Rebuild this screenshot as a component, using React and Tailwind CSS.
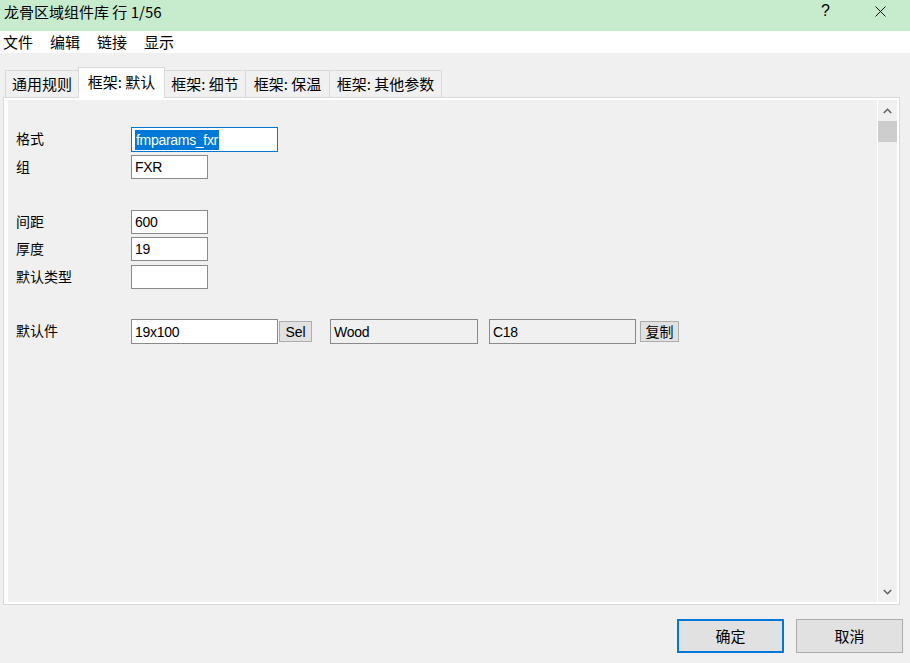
const cjk = "font-['Noto_Sans_CJK_SC',sans-serif]";
const latin = "font-['Liberation_Sans',Arial,sans-serif]";

function Field({ w, value, readOnly, focused }) {
  return (
    <div
      className={
        "h-full flex items-center px-[3px] border text-[14px] tracking-[-0.3px] leading-none text-black " +
        latin +
        " " +
        w +
        (focused ? " border-[#0078d7] bg-white" : " border-[#8a8a8a]") +
        (readOnly ? " bg-[#f0f0f0]" : focused ? "" : " bg-white")
      }
    >
      {focused ? (
        <span className="bg-[#0078d7] text-white px-[1px] py-[3px]">{value}</span>
      ) : (
        value
      )}
    </div>
  );
}

function SmallButton({ children, w, font }) {
  return (
    <div
      className={
        "h-[21px] flex items-center justify-center bg-[#e1e1e1] border border-[#adadad] leading-none text-black " +
        w +
        " " +
        font
      }
    >
      {children}
    </div>
  );
}

function Row({ label, mt, h, children }) {
  return (
    <div className={"flex items-center " + mt + " " + h}>
      <div className={"w-[123px] pl-[8px] pb-[3px] text-[14px] leading-none text-black " + cjk}>{label}</div>
      <div className="flex items-center h-full">{children}</div>
    </div>
  );
}

const tabs = [
  { label: "通用规则", w: "w-[74px]" },
  { label: "框架: 默认", w: "w-[87px]", active: true },
  { label: "框架: 细节", w: "w-[81px]" },
  { label: "框架: 保温", w: "w-[84px]" },
  { label: "框架: 其他参数", w: "w-[112px]" },
];

export default function App() {
  return (
    <div className={"w-[910px] h-[663px] bg-[#f0f0f0] flex flex-col overflow-hidden " + cjk}>
      {/* title bar */}
      <div className="h-[31px] bg-[#c6ebcd] flex items-center pl-[4px] pr-[24px] pb-[9px] shrink-0">
        <div className="text-[15px] leading-none text-black">龙骨区域组件库 行 1/56</div>
        <div className="ml-auto flex items-center gap-[45px]">
          <span className={"text-[16px] leading-none text-black " + latin}>?</span>
          <svg width="11" height="11" viewBox="0 0 11 11">
            <path d="M0.5 0.5 L10.5 10.5 M10.5 0.5 L0.5 10.5" stroke="#111" strokeWidth="1" />
          </svg>
        </div>
      </div>

      {/* menu bar */}
      <div className="h-[22px] bg-white flex items-center pl-[3px] pb-[2px] gap-[17px] text-[15px] leading-none text-black shrink-0">
        <span>文件</span>
        <span>编辑</span>
        <span>链接</span>
        <span>显示</span>
      </div>

      {/* tabs */}
      <div className="mt-[14px] h-[30px] flex items-end pl-[5px] relative z-10 shrink-0">
        {tabs.map((t, i) =>
          t.active ? (
            <div
              key={i}
              className={
                "h-[31px] -mb-px bg-white border-l border-t border-r border-[#d9d9d9] flex items-center justify-center pb-[4px] text-[15px] leading-none text-black -ml-px " +
                t.w
              }
            >
              {t.label}
            </div>
          ) : (
            <div
              key={i}
              className={
                "h-[27px] bg-[#f0f0f0] border-t border-r border-[#d9d9d9] flex items-center justify-center pb-[2px] text-[15px] leading-none text-black " +
                (i === 0 ? "border-l " : "") +
                t.w
              }
            >
              {t.label}
            </div>
          )
        )}
      </div>

      {/* tab panel */}
      <div className="ml-[3px] w-[897px] h-[508px] border border-[#d9d9d9] bg-white pl-[4px] pt-[2px] pr-[2px] pb-[2px] shrink-0">
        <div className="w-full h-full bg-[#f0f0f0] flex">
          <div className="flex-1 flex flex-col">
            <Row label="格式" mt="mt-[27px]" h="h-[25px]">
              <Field w="w-[147px]" value="fmparams_fxr" focused />
            </Row>
            <Row label="组" mt="mt-[3px]" h="h-[24px]">
              <Field w="w-[77px]" value="FXR" />
            </Row>
            <Row label="间距" mt="mt-[31px]" h="h-[24px]">
              <Field w="w-[77px]" value="600" />
            </Row>
            <Row label="厚度" mt="mt-[3px]" h="h-[24px]">
              <Field w="w-[77px]" value="19" />
            </Row>
            <Row label="默认类型" mt="mt-[4px]" h="h-[24px]">
              <Field w="w-[77px]" value="" />
            </Row>
            <Row label="默认件" mt="mt-[30px]" h="h-[25px]">
              <Field w="w-[147px]" value="19x100" />
              <div className="ml-[1px]">
                <SmallButton w="w-[33px]" font={"text-[14px] " + latin}>
                  Sel
                </SmallButton>
              </div>
              <div className="ml-[18px] h-full">
                <Field w="w-[148px]" value="Wood" readOnly />
              </div>
              <div className="ml-[11px] h-full">
                <Field w="w-[147px]" value="C18" readOnly />
              </div>
              <div className="ml-[4px]">
                <SmallButton w="w-[39px]" font={"text-[14px] pb-[2px] " + cjk}>
                  复制
                </SmallButton>
              </div>
            </Row>
          </div>

          {/* scrollbar */}
          <div className="w-[20px] border-l border-white flex flex-col">
            <div className="h-[21px] flex items-center justify-center">
              <svg width="9" height="6" viewBox="0 0 9 6">
                <path d="M0.8 5 L4.5 1.3 L8.2 5" fill="none" stroke="#606060" strokeWidth="1.6" />
              </svg>
            </div>
            <div className="h-[21px] bg-[#cdcdcd]" />
            <div className="flex-1" />
            <div className="h-[20px] flex items-center justify-center">
              <svg width="9" height="6" viewBox="0 0 9 6">
                <path d="M0.8 1 L4.5 4.7 L8.2 1" fill="none" stroke="#606060" strokeWidth="1.6" />
              </svg>
            </div>
          </div>
        </div>
      </div>

      {/* bottom buttons */}
      <div className="mt-[14px] flex justify-end pr-[7px] gap-[12px] shrink-0">
        <div className="w-[107px] h-[34px] border-2 border-[#0078d7] bg-[#e1e1e1] flex items-center justify-center pb-[2px] text-[15px] leading-none text-black">
          确定
        </div>
        <div className="w-[107px] h-[34px] border border-[#adadad] bg-[#e1e1e1] flex items-center justify-center pb-[2px] text-[15px] leading-none text-black">
          取消
        </div>
      </div>
    </div>
  );
}
